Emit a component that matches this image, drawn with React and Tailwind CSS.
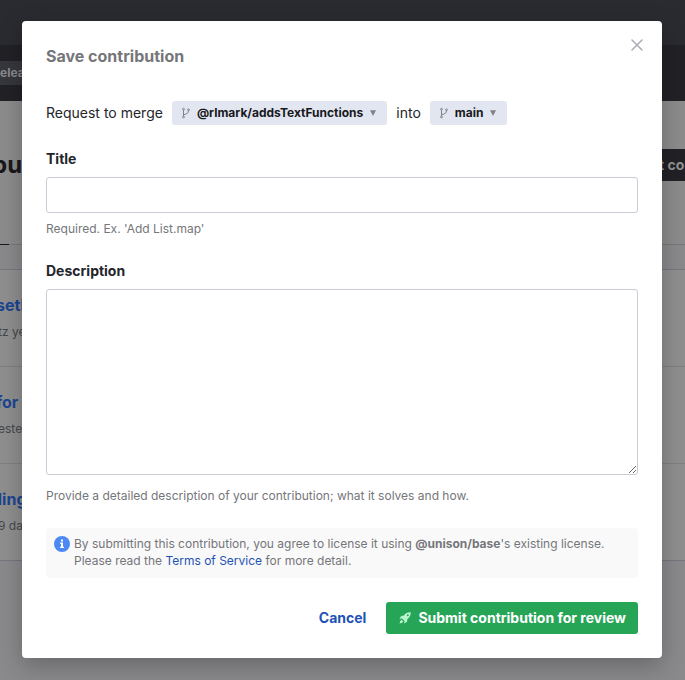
import React from "react";

function BranchIcon() {
  return (
    <svg viewBox="0 0 10 12" className="h-3 w-[10px] shrink-0" fill="none" stroke="#818287" strokeWidth="1">
      <circle cx="2.5" cy="2.2" r="0.9" />
      <circle cx="2.5" cy="10" r="0.9" />
      <circle cx="7.5" cy="2.8" r="0.9" />
      <path d="M2.5 3v6M7.5 3.7c0 2.3-1.5 3.3-5 4" />
    </svg>
  );
}

function BranchButton({ name }) {
  return (
    <button type="button" className="flex h-6 items-center rounded-[3px] bg-[#e1e6f0] pr-[10px] pl-[9px] text-xs font-bold text-[#18181c]">
      <BranchIcon />
      <span className="ml-[6px]">{name}</span>
      <svg viewBox="0 0 8 8" className="ml-[6px] h-2 w-2" fill="#818287">
        <path d="M1 1.2h6L4 7z" />
      </svg>
    </button>
  );
}

const rows = [
  { title: "seth", meta: "tz ye", shift: "-ml-1" },
  { title: "for", meta: "ester", shift: "-ml-1" },
  { title: "ding", meta: "9 day", shift: "-ml-2" },
];

function Backdrop() {
  return (
    <div aria-hidden="true" className="min-h-screen overflow-hidden bg-[#8a8a8d]">
      <div className="h-[45px] bg-[#2a2b30]" />
      <div className="flex h-14 items-center bg-[#212126]">
        <span className="flex h-6 w-16 items-center bg-[#36373c] text-xs font-bold text-[#8a8a8d]">elea</span>
      </div>
      <div className="h-[143px] bg-[#8c8c8d]">
        <div className="flex items-center justify-between pt-12">
          <span className="-ml-2 text-2xl leading-8 font-bold text-[#18181c]">bu</span>
          <span className="-mr-2 flex h-8 w-40 items-center justify-end bg-[#212126] text-sm font-bold text-[#929294]">Submit con</span>
        </div>
      </div>
      <div className="h-px bg-[#77787c]">
        <div className="h-px w-[9px] bg-[#18181c]" />
      </div>
      <div className="mt-6 border-y border-[#747780] bg-[#8f8f8f]">
        {rows.map((row) => (
          <div key={row.title} className="h-[97px] border-b border-[#7f7f82] pt-[23px] last:h-[96px] last:border-0">
            <div className={`${row.shift} text-base leading-6 font-bold text-[#1c4591]`}>{row.title}</div>
            <div className="-ml-[2px] mt-[5px] text-xs leading-5 text-[#46474b]">{row.meta}</div>
          </div>
        ))}
      </div>
    </div>
  );
}

function Dialog() {
  return (
    <form
      role="dialog"
      aria-labelledby="dialog-title"
      onSubmit={(event) => event.preventDefault()}
      className="w-full max-w-[640px] rounded bg-white px-6 pt-[23px] pb-6 shadow-[0_8px_24px_rgba(0,0,0,0.25)]"
    >
      <header className="flex items-start justify-between">
        <h1 id="dialog-title" className="text-base leading-6 font-bold text-[#75767a]">Save contribution</h1>
        <button type="button" aria-label="Close" className="-mt-[7px] -mr-[7px] flex h-4 w-4 items-center justify-center">
          <svg viewBox="0 0 12 12" className="h-3 w-3" fill="none" stroke="#aaacb3" strokeWidth="1.5" strokeLinecap="round">
            <path d="M1 1l10 10M11 1L1 11" />
          </svg>
        </button>
      </header>

      <div className="mt-[33px] flex items-center gap-[9px] text-sm">
        <span>Request to merge</span>
        <BranchButton name="@rlmark/addsTextFunctions" />
        <span>into</span>
        <BranchButton name="main" />
      </div>

      <div className="mt-6">
        <label htmlFor="title" className="block text-sm leading-5 font-bold">Title</label>
        <input id="title" type="text" className="mt-2 block h-9 w-full rounded-[3px] border border-[#c9ccd4] px-3 text-sm" />
        <p className="mt-2 text-xs leading-4 text-[#75767a]">Required. Ex. 'Add List.map'</p>
      </div>

      <div className="mt-6">
        <label htmlFor="description" className="block text-sm leading-5 font-bold">Description</label>
        <textarea id="description" className="mt-2 block h-[186px] w-full rounded-[3px] border border-[#c9ccd4] px-3 py-2 text-sm" />
        <p className="mt-[13px] text-xs leading-4 text-[#75767a]">
          Provide a detailed description of your contribution; what it solves and how.
        </p>
      </div>

      <div className="mt-6 flex gap-1 rounded bg-[#f9f9f9] px-2 pt-[7px] pb-[9px] text-xs leading-[17px] text-[#75767a]">
        <svg viewBox="0 0 16 16" className="mt-px h-4 w-4 shrink-0">
          <circle cx="8" cy="8" r="8" fill="#4c89f5" />
          <path d="M7 3.5h2v2H7zM6 6.5h3v4.2h1V12H6v-1.3h1V7.8H6z" fill="white" />
        </svg>
        <p>
          By submitting this contribution, you agree to license it using <strong className="font-bold">@unison/base</strong>'s existing license.
          <br />
          Please read the <a href="#terms" className="text-[#1e53b5]">Terms of Service</a> for more detail.
        </p>
      </div>

      <footer className="mt-6 flex items-center justify-end gap-5 text-sm font-bold">
        <button type="button" className="text-[#1e53b5]">Cancel</button>
        <button type="submit" className="flex h-8 items-center gap-[6px] rounded-[3px] bg-[#27a557] px-3 text-white">
          <svg viewBox="0 0 14 14" className="h-[14px] w-[14px]" fill="#b9f8cf">
            <path fillRule="evenodd" d="M12.7 1.3C9.8 1.1 7.6 2.2 6 4.6L3.3 5 1.4 7.8l2.7-.3 2.4 2.4-.3 2.7L9 10.7 9.4 8c2.4-1.6 3.5-3.8 3.3-6.7zM9.8 3.3a1 1 0 110 2 1 1 0 010-2z" />
            <path d="M3.4 8.8l1.8 1.8-1.1 1.1-2.6.8.8-2.6z" />
          </svg>
          Submit contribution for review
        </button>
      </footer>
    </form>
  );
}

export default function App() {
  return (
    <div className="relative font-['Inter','Liberation_Sans',sans-serif] text-[#24252a]">
      <Backdrop />
      <div className="absolute inset-x-0 top-0 flex justify-center pt-[21px] pr-[23px] pb-[22px] pl-[22px]">
        <Dialog />
      </div>
    </div>
  );
}
